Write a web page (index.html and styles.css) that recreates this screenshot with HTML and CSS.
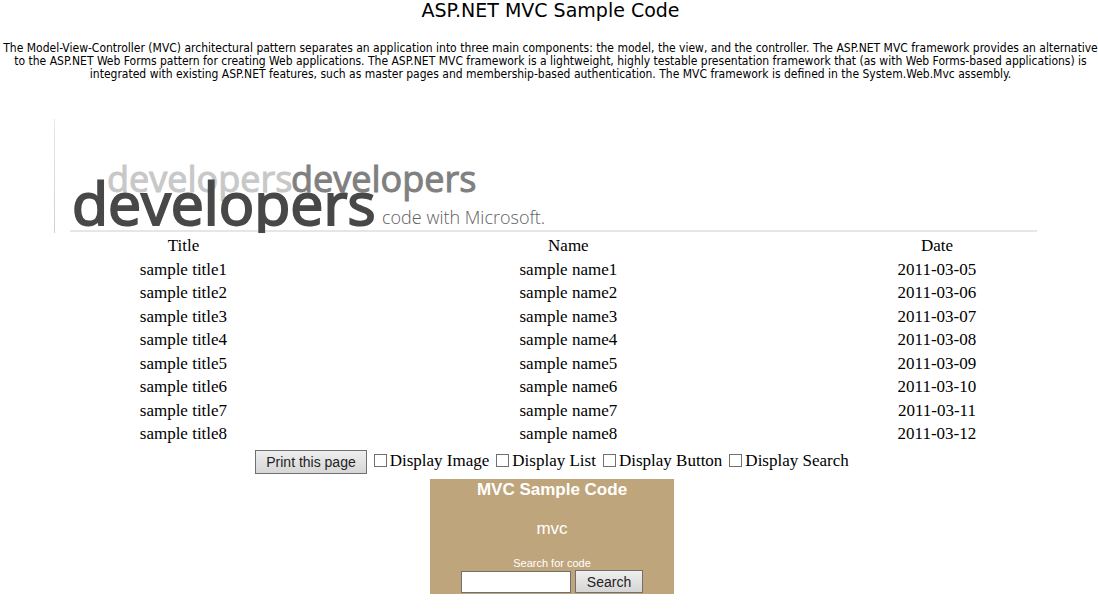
FILE: index.html
```
<!DOCTYPE html>
<html lang="en">
<head>
<meta charset="utf-8">
<title>ASP.NET MVC Sample Code</title>
<link rel="stylesheet" href="styles.css">
</head>
<body>
<header class="intro">
<h1 class="intro-title">ASP.NET MVC Sample Code</h1>
<p class="intro-text">The Model-View-Controller (MVC) architectural pattern separates an application into three main components: the model, the view, and the controller. The ASP.NET MVC framework provides an alternative to the ASP.NET Web Forms pattern for creating Web applications. The ASP.NET MVC framework is a lightweight, highly testable presentation framework that (as with Web Forms-based applications) is integrated with existing ASP.NET features, such as master pages and membership-based authentication. The MVC framework is defined in the System.Web.Mvc assembly.</p>
</header>
<main class="content">
<svg class="banner" viewBox="0 0 996 114" role="img" aria-label="developers developers developers code with Microsoft.">
<defs>
<linearGradient id="edge" x1="0" y1="0" x2="0" y2="1"><stop offset="0" stop-color="#e8e8e8"/><stop offset="1" stop-color="#cfcfcf"/></linearGradient>
</defs>
<rect x="0" y="0" width="1" height="114" fill="url(#edge)"/>
<rect x="16" y="111" width="967" height="2" fill="#e6e6e6"/>
<text class="word word-light" x="53" y="73">developers</text>
<text class="word word-mid" x="237" y="73">developers</text>
<text class="word word-dark" x="18" y="106">developers</text>
<text class="tagline" x="328" y="105">code with Microsoft.</text>
</svg>
<table class="samples">
<thead><tr><th>Title</th><th>Name</th><th>Date</th></tr></thead>
<tbody>
<tr><td>sample title1</td><td>sample name1</td><td>2011-03-05</td></tr>
<tr><td>sample title2</td><td>sample name2</td><td>2011-03-06</td></tr>
<tr><td>sample title3</td><td>sample name3</td><td>2011-03-07</td></tr>
<tr><td>sample title4</td><td>sample name4</td><td>2011-03-08</td></tr>
<tr><td>sample title5</td><td>sample name5</td><td>2011-03-09</td></tr>
<tr><td>sample title6</td><td>sample name6</td><td>2011-03-10</td></tr>
<tr><td>sample title7</td><td>sample name7</td><td>2011-03-11</td></tr>
<tr><td>sample title8</td><td>sample name8</td><td>2011-03-12</td></tr>
</tbody>
</table>
<div class="options">
<button class="button print" type="button">Print this page</button>
<label class="option"><input class="check" type="checkbox">Display Image</label>
<label class="option"><input class="check" type="checkbox">Display List</label>
<label class="option"><input class="check" type="checkbox">Display Button</label>
<label class="option"><input class="check" type="checkbox">Display Search</label>
</div>
<form class="search">
<h2 class="search-title">MVC Sample Code</h2>
<p class="search-topic">mvc</p>
<label class="search-label" for="query">Search for code</label>
<div class="search-row">
<input class="search-input" id="query" type="text">
<button class="button find" type="button">Search</button>
</div>
</form>
</main>
</body>
</html>
```
FILE: styles.css
```
* {
  box-sizing: border-box;
}

body {
  margin: 0;
  background: #fff;
  color: #000;
  font-family: "Liberation Serif", serif;
  font-size: 17px;
}

.intro {
  padding-left: 3px;
  text-align: center;
}

.intro-title {
  margin: 0;
  font-family: "DejaVu Sans", sans-serif;
  font-size: 19px;
  font-weight: 400;
  line-height: 20px;
}

.intro-text {
  margin: 22px 0 0;
  font-family: "DejaVu Sans Condensed", "DejaVu Sans", sans-serif;
  font-size: 12px;
  line-height: 13px;
}

.content {
  display: flex;
  flex-direction: column;
  align-items: center;
  padding: 38px 0 0 6px;
}

.banner {
  display: block;
  width: 100%;
  max-width: 996px;
}

.word {
  font-family: "Open Sans", sans-serif;
  font-size: 36px;
  stroke-width: 1px;
}

.word-light {
  fill: #c8c8c8;
  stroke: #c8c8c8;
}

.word-mid {
  fill: #808080;
  stroke: #808080;
}

.word-dark {
  fill: #484848;
  stroke: #484848;
  font-size: 59px;
  stroke-width: 2px;
}

.tagline {
  fill: #606060;
  font-family: "Open Sans", sans-serif;
  font-size: 18px;
  font-weight: 300;
}

.samples {
  width: 100%;
  height: 212px;
  margin-top: 1px;
  border-collapse: collapse;
  table-layout: fixed;
  text-align: center;
}

.samples th,
.samples td {
  height: 23px;
  padding: 0;
  font-weight: 400;
  line-height: 20px;
}

.samples th {
  height: 24px;
}

.samples th:nth-child(1) {
  width: 32.5%;
}

.samples th:nth-child(2) {
  width: 38%;
}

.options {
  display: flex;
  align-items: center;
  gap: 7px;
  margin-top: 4px;
}

.option {
  display: flex;
  align-items: center;
  gap: 3px;
  padding-bottom: 3px;
  line-height: 20px;
}

.check {
  appearance: none;
  width: 13px;
  height: 13px;
  margin: 0;
  border: 1px solid #707070;
  background: #fff;
}

.check:checked {
  background: #707070;
}

.button {
  height: 24px;
  padding: 0 11px;
  border: 1px solid #707070;
  background: linear-gradient(#eee, #d6d6d6);
  color: #222;
  font-family: "Liberation Sans", sans-serif;
  font-size: 14px;
}

.print {
  padding: 0 10px;
}

.search {
  display: flex;
  flex-direction: column;
  align-items: center;
  width: 244px;
  margin-top: 5px;
  padding-bottom: 1px;
  background: #bfa57c;
  color: #fff;
  font-family: "Liberation Sans", sans-serif;
}

.search-title {
  margin: 0;
  font-size: 17px;
  line-height: 22px;
}

.search-topic {
  margin: 19px 0;
  font-size: 17px;
  line-height: 18px;
}

.search-label {
  font-size: 11px;
  line-height: 13px;
}

.search-row {
  display: flex;
  align-items: flex-end;
  gap: 4px;
}

.find {
  height: 23px;
}

.search-input {
  width: 110px;
  height: 22px;
  border: 1px solid #707070;
  background: #fff;
  font-size: 14px;
}
```
